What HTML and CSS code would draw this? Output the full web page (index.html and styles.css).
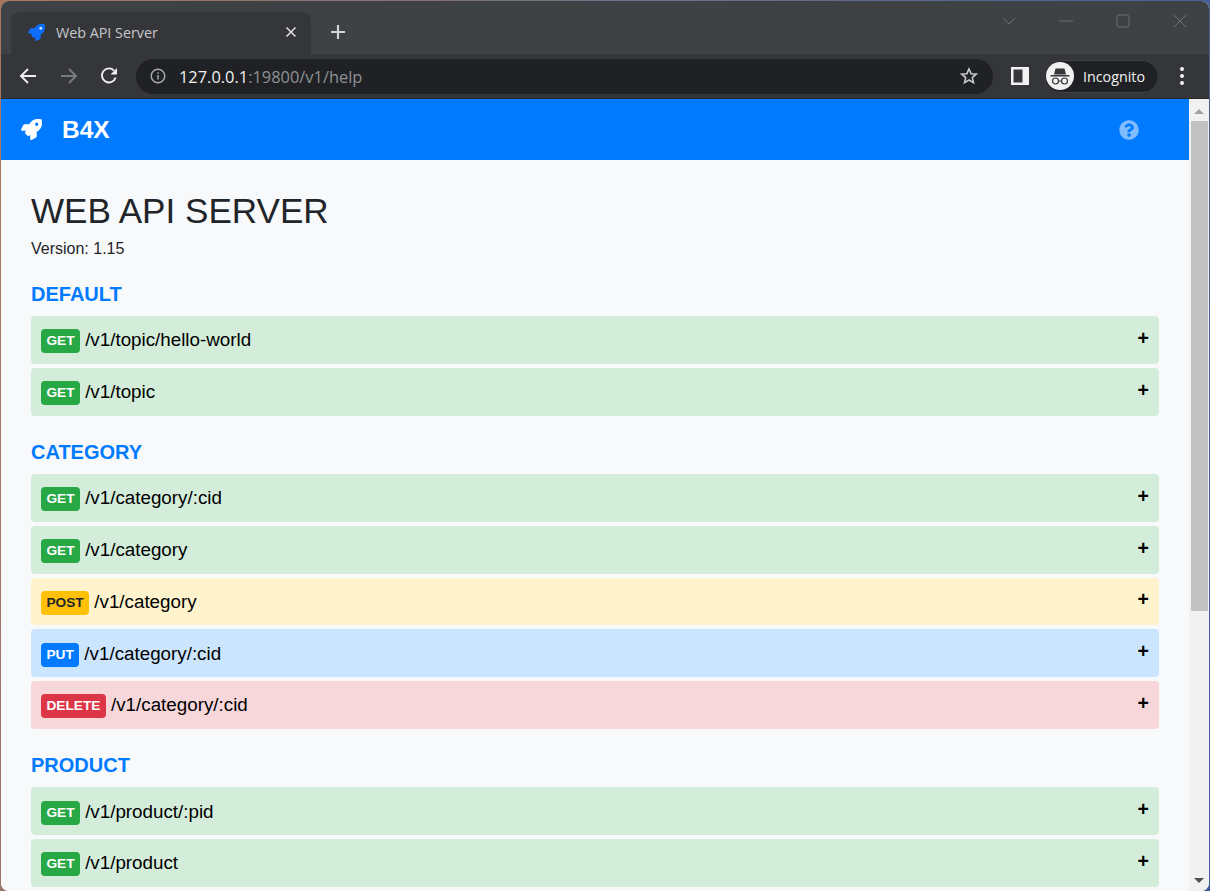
FILE: index.html
```html
<!DOCTYPE html>
<html>
<head>
    <title>Web API Server</title>
    <link rel="stylesheet" href="styles.css">
</head>
<body>
<div class="window">
    <div class="tabstrip">
        <div class="tab">
            <svg class="tab-icon" viewBox="0 0 512 512"><path d="M505.12 19.09c-1.19-5.53-6.66-11-12.21-12.19C460.72 0 435.51 0 410.41 0 307.18 0 245.27 55.2 199.05 128H94.84c-16.35.02-35.56 11.88-42.89 26.48L2.52 253.3A28.4 28.4 0 0 0 0 264a24 24 0 0 0 24 24h103.81l-22.47 22.47c-11.37 11.36-13 32.26 0 45.25l50.9 50.9c11.16 11.19 32.16 13.16 45.28 0L224 384.16V488a24 24 0 0 0 24 24 28.56 28.56 0 0 0 10.71-2.52l98.73-49.39c14.63-7.3 26.51-26.5 26.51-42.86V312.8c72.6-46.31 128.03-108.41 128.03-211.1.1-25.2.1-50.4-6.86-82.61z"/><circle class="tab-icon-dot" cx="384" cy="128" r="40"/></svg>
            <span class="tab-title">Web API Server</span>
            <svg class="tab-close" viewBox="0 0 12 12"><path d="M1.5 1.5l9 9M10.5 1.5l-9 9"/></svg>
        </div>
        <svg class="new-tab" viewBox="0 0 16 16"><path d="M8 1v14M1 8h14"/></svg>
        <div class="win-controls">
            <svg viewBox="0 0 14 14"><path d="M1 4l6 6 6-6"/></svg>
            <svg viewBox="0 0 14 14"><path d="M0 7h14"/></svg>
            <svg viewBox="0 0 14 14"><rect x="1" y="1" width="12" height="12" rx="2"/></svg>
            <svg viewBox="0 0 14 14"><path d="M.5.5l13 13M13.5.5l-13 13"/></svg>
        </div>
    </div>

    <div class="toolbar">
        <svg class="nav-icon" viewBox="0 0 18 18"><path d="M17 9H2M9 2L2 9l7 7"/></svg>
        <svg class="nav-icon dim" viewBox="0 0 18 18"><path d="M1 9h15M9 2l7 7-7 7"/></svg>
        <svg class="nav-icon" viewBox="0 0 18 18"><path d="M15.6 10.5A7 7 0 1 1 14 3.6"/><path class="solid" d="M17 1v6.4h-6.4z"/></svg>
        <div class="omnibox">
            <svg class="info" viewBox="0 0 16 16"><circle cx="8" cy="8" r="6.8"/><path d="M8 7v4.6M8 4.2v1.6"/></svg>
            <span class="url">127.0.0.1<span class="url-rest">:19800/v1/help</span></span>
            <svg class="star" viewBox="0 0 18 18"><path d="M9 2l2.1 4.7 5.1.5-3.9 3.4 1.2 5L9 13l-4.5 2.6 1.2-5-3.9-3.4 5.1-.5z"/></svg>
        </div>
        <svg class="side-panel" viewBox="0 0 18 18"><path fill-rule="evenodd" d="M0 0h18v18H0zM2.500 2.500v13h9v-13z"/></svg>
        <div class="profile">
            <svg class="avatar" viewBox="0 0 28 28"><circle class="face" cx="14" cy="14" r="14"/><path d="M9.500 6.500h9l1.500 6H8zM4.500 13h19v1.500h-19z"/><circle class="lens" cx="9.500" cy="19" r="3"/><circle class="lens" cx="18.500" cy="19" r="3"/><path class="lens" d="M12.500 19h3"/></svg>
            <span class="profile-name">Incognito</span>
        </div>
        <div class="kebab"><i></i><i></i><i></i></div>
    </div>

    <div class="viewport">
        <div class="page">
            <nav class="navbar">
                <svg class="brand-icon" viewBox="0 0 512 512"><path d="M505.12 19.09c-1.19-5.53-6.66-11-12.21-12.19C460.72 0 435.51 0 410.41 0 307.18 0 245.27 55.2 199.05 128H94.84c-16.35.02-35.56 11.88-42.89 26.48L2.52 253.3A28.4 28.4 0 0 0 0 264a24 24 0 0 0 24 24h103.81l-22.47 22.47c-11.37 11.36-13 32.26 0 45.25l50.9 50.9c11.16 11.19 32.16 13.16 45.28 0L224 384.16V488a24 24 0 0 0 24 24 28.56 28.56 0 0 0 10.71-2.52l98.73-49.39c14.63-7.3 26.51-26.5 26.51-42.86V312.8c72.6-46.31 128.03-108.41 128.03-211.1.1-25.2.1-50.4-6.86-82.61zM384.04 168a40 40 0 1 1 40.01-40 40 40 0 0 1-40.01 40z"/></svg>
                <span class="brand">B4X</span>
                <svg class="help-icon" viewBox="0 0 512 512"><path d="M504 256c0 136.997-111.043 248-248 248S8 392.997 8 256C8 119.083 119.043 8 256 8s248 111.083 248 248zM262.655 90c-54.497 0-89.255 22.957-116.549 63.758-3.536 5.286-2.353 12.415 2.715 16.258l34.699 26.31c5.205 3.947 12.621 3.008 16.665-2.122 17.864-22.658 30.113-35.797 57.303-35.797 20.429 0 45.698 13.148 45.698 32.958 0 14.976-12.363 22.667-32.534 33.976C247.128 238.528 216 254.941 216 296v4c0 6.627 5.373 12 12 12h56c6.627 0 12-5.373 12-12v-1.333c0-28.462 83.186-29.647 83.186-106.667 0-58.002-60.165-102-116.531-102zM256 338c-25.365 0-46 20.635-46 46 0 25.364 20.635 46 46 46s46-20.636 46-46c0-25.365-20.635-46-46-46z"/></svg>
            </nav>

            <main class="content">
                <h1>WEB API SERVER</h1>
                <p class="version">Version: 1.15</p>

                <h2>DEFAULT</h2>
                <div class="route route-get"><div class="route-title"><span class="badge badge-get">GET</span> /v1/topic/hello-world</div><b class="plus">+</b></div>
                <div class="route route-get"><div class="route-title"><span class="badge badge-get">GET</span> /v1/topic</div><b class="plus">+</b></div>

                <h2>CATEGORY</h2>
                <div class="route route-get"><div class="route-title"><span class="badge badge-get">GET</span> /v1/category/:cid</div><b class="plus">+</b></div>
                <div class="route route-get"><div class="route-title"><span class="badge badge-get">GET</span> /v1/category</div><b class="plus">+</b></div>
                <div class="route route-post"><div class="route-title"><span class="badge badge-post">POST</span> /v1/category</div><b class="plus">+</b></div>
                <div class="route route-put"><div class="route-title"><span class="badge badge-put">PUT</span> /v1/category/:cid</div><b class="plus">+</b></div>
                <div class="route route-delete"><div class="route-title"><span class="badge badge-delete">DELETE</span> /v1/category/:cid</div><b class="plus">+</b></div>

                <h2>PRODUCT</h2>
                <div class="route route-get"><div class="route-title"><span class="badge badge-get">GET</span> /v1/product/:pid</div><b class="plus">+</b></div>
                <div class="route route-get"><div class="route-title"><span class="badge badge-get">GET</span> /v1/product</div><b class="plus">+</b></div>
            </main>
        </div>

        <div class="scrollbar">
            <div class="arrow-up"></div>
            <div class="thumb"></div>
            <div class="arrow-down"></div>
        </div>
    </div>
</div>
</body>
</html>
```

FILE: styles.css
```css
html, body { margin: 0; height: 100%; overflow: hidden; }
body { background: linear-gradient(100deg, #a9775f, #6b6f8c 50%, #3d5a9c); font-family: "Liberation Sans", Arial, sans-serif; }

.window { display: flex; flex-direction: column; height: 890px; margin: 1px 1px 0 1px; border-radius: 8px; overflow: hidden; background: #f8f9fa; }

/* browser chrome */
.tabstrip { display: flex; align-items: flex-end; height: 53px; flex: none; background: #3f4245; }
.tab { display: flex; align-items: center; width: 300px; height: 42px; margin-left: 10px; border-radius: 8px 8px 0 0; background: #35363a; box-sizing: border-box; padding: 0 14px 2px 17px; }
.tab-icon { width: 17px; height: 17px; fill: #0d6efd; }
.tab-icon .tab-icon-dot { fill: #e8f1ff; }
.tab-title { flex: 1; margin-left: 11px; color: #c6c8ca; font-family: "Open Sans", sans-serif; font-size: 14.3px; }
.tab-close { width: 12px; height: 12px; fill: none; stroke: #dcdddd; stroke-width: 1.6; }
.new-tab { width: 16px; height: 16px; margin: 0 0 14px 19px; fill: none; stroke: #d4d5d6; stroke-width: 2.2; }
.win-controls { display: flex; gap: 43px; margin: 0 22px 26px auto; }
.win-controls svg { width: 14px; height: 14px; fill: none; stroke: #6d7073; stroke-width: 1; }

.toolbar { display: flex; align-items: center; height: 44px; flex: none; background: #35363a; border-bottom: 1px solid #28292b; }
.nav-icon { width: 18px; height: 18px; margin-left: 18px; margin-right: 5px; fill: none; stroke: #f0f0f0; stroke-width: 1.9; }
.nav-icon + .nav-icon + .nav-icon { margin-left: 17px; margin-right: 1px; }
.nav-icon.dim { stroke: #7b7c7e; }
.nav-icon .solid { fill: #f0f0f0; stroke: none; }
.omnibox { display: flex; align-items: center; width: 857px; height: 35px; margin-left: 17px; border-radius: 18px; background: #202124; box-sizing: border-box; padding: 0 15px 0 14px; }
.info { width: 16px; height: 16px; fill: none; stroke: #a5a7a9; stroke-width: 1.5; }
.url { flex: 1; margin-left: 13px; color: #f1f1f1; font-family: "Open Sans", sans-serif; font-size: 16.4px; }
.url-rest { color: #8f9194; }
.star { width: 18px; height: 18px; fill: none; stroke: #c6c8ca; stroke-width: 1.6; }
.side-panel { width: 18px; height: 18px; margin-left: 18px; fill: #f1f1f1; }
.profile { display: flex; align-items: center; width: 115px; height: 33px; margin-left: 15px; border-radius: 17px; background: #202124; box-sizing: border-box; border: 1px solid #3f4144; padding-left: 1px; }
.avatar { width: 28px; height: 28px; fill: #35363a; }
.avatar .face { fill: #f1f1f1; }
.avatar .lens { fill: none; stroke: #35363a; stroke-width: 1.2; }
.profile-name { margin-left: 9px; color: #f1f1f1; font-family: "Open Sans", sans-serif; font-size: 14.3px; }
.kebab { display: flex; flex-direction: column; gap: 3px; margin-left: 21px; }
.kebab i { width: 4px; height: 4px; border-radius: 50%; background: #f1f1f1; }

/* page */
.viewport { display: flex; flex: 1; min-height: 0; }
.page { flex: 1; min-width: 0; overflow: hidden; background: #f8f9fa; color: #212529; }

.navbar { display: flex; align-items: center; height: 61px; background: #007bff; padding: 0 50px 0 20px; }
.brand-icon { width: 21px; height: 21px; fill: #fff; }
.brand { margin-left: 20px; color: #fff; font-size: 24.5px; font-weight: bold; }
.help-icon { width: 20px; height: 20px; margin-left: auto; fill: #80bdff; }

.content { padding: 30px 30px 0 30px; }
h1 { margin: 0; font-size: 35.1px; font-weight: normal; line-height: 42px; }
.version { margin: 5px 0 0 0; font-size: 16px; line-height: 24px; }
h2 { margin: 24.5px 0 10px 0; color: #007bff; font-size: 20px; line-height: 24px; }
.version + h2 { margin-top: 21px; }

.route { display: flex; justify-content: space-between; align-items: center; height: 47.75px; margin-bottom: 4px; border-radius: 4px; box-sizing: border-box; padding: 0 10px; color: #000; font-size: 18.8px; line-height: 24px; }
.route-get { background: #d4edda; }
.route-post { background: #fff3cd; }
.route-put { background: #cce5ff; }
.route-delete { background: #f8d7da; }
.route-title { padding-top: 2px; }
.plus { margin: -4px 0 0 0; font-size: 19.5px; }

.badge { display: inline-block; height: 24px; border-radius: 4px; padding: 0 5.4px; color: #fff; font-size: 13.7px; font-weight: bold; line-height: 24px; vertical-align: 1px; }
.badge-get { background: #28a745; }
.badge-post { background: #ffc107; color: #212529; }
.badge-put { background: #007bff; }
.badge-delete { background: #dc3545; }

.scrollbar { display: flex; flex-direction: column; align-items: center; flex: none; width: 20px; background: #f1f1f1; }
.arrow-up { width: 0; height: 0; margin: 10px 0 7px 0; border: 5px solid transparent; border-top: 0; border-bottom: 5px solid #a3a3a3; }
.thumb { width: 17px; height: 490px; background: #c1c1c1; }
.arrow-down { width: 0; height: 0; margin-top: auto; margin-bottom: 8px; border: 5px solid transparent; border-bottom: 0; border-top: 5px solid #505050; }
```
